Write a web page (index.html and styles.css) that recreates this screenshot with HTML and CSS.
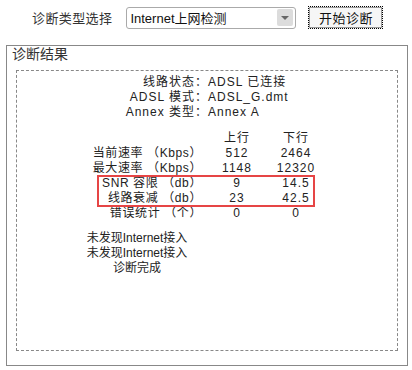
FILE: index.html
```html
<html>
    <head>
        <meta charset="utf-8">
        <link rel="stylesheet" href="styles.css">
    </head>
    <body>
        <div class="toolbar">
            <span class="toolbar-label">诊断类型选择</span>
            <div class="select">
                <span class="select-value">Internet上网检测</span>
                <span class="select-arrow"></span>
            </div>
            <button class="start-btn">开始诊断</button>
        </div>
        <div class="result">
            <div class="result-title">诊断结果</div>
            <div class="result-body">
                <div class="status">
                    <div class="status-label">线路状态：</div><div>ADSL 已连接</div>
                    <div class="status-label">ADSL 模式：</div><div>ADSL_G.dmt</div>
                    <div class="status-label">Annex 类型：</div><div>Annex A</div>
                </div>
                <div class="stats">
                    <div></div><div class="num">上行</div><div class="num">下行</div>
                    <div class="stat-label">当前速率 （Kbps）</div><div class="num">512</div><div class="num">2464</div>
                    <div class="stat-label">最大速率 （Kbps）</div><div class="num">1148</div><div class="num">12320</div>
                    <div class="stat-label">SNR 容限 （db）</div><div class="num">9</div><div class="num">14.5</div>
                    <div class="stat-label">线路衰减 （db）</div><div class="num">23</div><div class="num">42.5</div>
                    <div class="stat-label">错误统计 （个）</div><div class="num">0</div><div class="num">0</div>
                    <div class="highlight"></div>
                </div>
                <div class="messages">
                    <div>未发现Internet接入</div>
                    <div>未发现Internet接入</div>
                    <div>诊断完成</div>
                </div>
            </div>
        </div>
    </body>
</html>
```

FILE: styles.css
```css
body {
    margin: 0;
    background: #fff;
    color: #222;
    font-family: "Liberation Sans", "Noto Sans CJK SC", sans-serif;
}
.toolbar {
    display: flex;
    align-items: center;
    height: 23px;
    padding: 6px 0 0 32px;
}
.toolbar-label {
    font-size: 13px;
    letter-spacing: 0.4px;
    color: #333;
    margin-right: 14px;
}
.select {
    width: 170px;
    height: 22px;
    box-sizing: border-box;
    border: 1px solid #aaa;
    border-radius: 3px;
    display: flex;
    align-items: center;
    justify-content: space-between;
    padding: 0 2px 0 3px;
    margin-right: 12px;
}
.select-value {
    font-size: 13px;
    color: #111;
}
.select-arrow {
    width: 16px;
    height: 17px;
    background: #dcdcdc;
    border-radius: 2px;
    position: relative;
}
.select-arrow::after {
    content: "";
    position: absolute;
    left: 4px;
    top: 7px;
    border-left: 4px solid transparent;
    border-right: 4px solid transparent;
    border-top: 4px solid #666;
}
.start-btn {
    width: 75px;
    height: 23px;
    border: 1px dotted #000;
    box-shadow: inset 0 0 0 1px #999;
    background: #f6f6f6;
    font-family: "Liberation Sans", "Noto Sans CJK SC", sans-serif;
    font-size: 13px;
    letter-spacing: 0.5px;
    color: #111;
    padding: 0;
}
.result {
    margin: 16px 4px 0 6px;
    height: 321px;
    box-sizing: border-box;
    border: 1px solid #888;
}
.result-title {
    font-size: 14px;
    line-height: 16px;
    padding: 0 0 0 5px;
    color: #333;
}
.result-body {
    margin: 8px 9px 0 9px;
    height: 281px;
    box-sizing: border-box;
    border: 1px dashed #888;
    padding-top: 4px;
    font-size: 12px;
    line-height: 15px;
    letter-spacing: 1px;
    color: #222;
}
.status {
    display: grid;
    grid-template-columns: 191px auto;
}
.status-label {
    text-align: right;
}
.stats {
    position: relative;
    margin-top: 11px;
    display: grid;
    grid-template-columns: 185px 70px 48px;
}
.stat-label {
    text-align: right;
    letter-spacing: 0.6px;
}
.num {
    text-align: center;
}
.highlight {
    position: absolute;
    left: 80px;
    top: 44px;
    width: 218px;
    height: 32px;
    box-sizing: border-box;
    border: 2px solid #e64545;
}
.messages {
    margin: 10px 0 0 60px;
    width: 120px;
    text-align: center;
    letter-spacing: 0;
}
```
